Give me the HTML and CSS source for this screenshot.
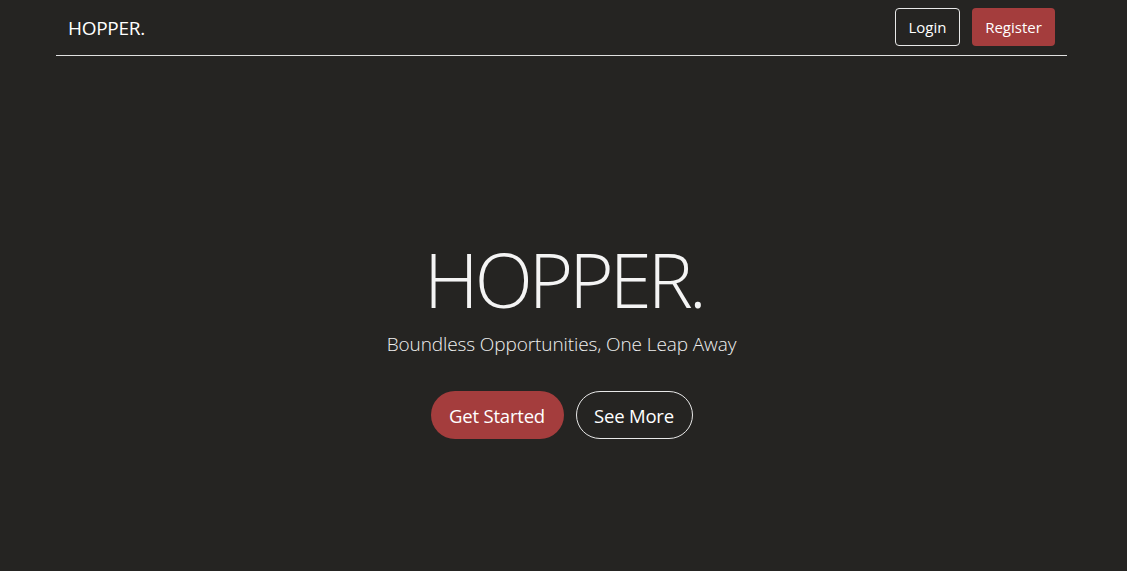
FILE: index.html
```html
<!DOCTYPE html>
<html lang="en">
<head>
<meta charset="utf-8">
<title>Hopper</title>
<link rel="stylesheet" href="styles.css">
</head>
<body>
<header class="nav">
  <a class="brand" href="#">HOPPER.</a>
  <div class="nav-actions">
    <a class="btn btn-outline" href="#">Login</a>
    <a class="btn btn-red" href="#">Register</a>
  </div>
</header>
<main class="hero">
  <h1 class="hero-title">HOPPER.</h1>
  <p class="hero-sub">Boundless Opportunities, One Leap Away</p>
  <div class="hero-actions">
    <a class="pill pill-red" href="#">Get Started</a>
    <a class="pill pill-outline" href="#">See More</a>
  </div>
</main>
</body>
</html>
```

FILE: styles.css
```css
* { box-sizing: border-box; }
html, body { height: 100%; }
body {
  margin: 0;
  background: #252422;
  color: #f2f2f2;
  font-family: "Open Sans", "Noto Sans", sans-serif;
}
a { text-decoration: none; color: inherit; }

.nav {
  margin: 0 60px 0 56px;
  height: 56px;
  padding: 0 12px;
  display: flex;
  align-items: center;
  justify-content: space-between;
  border-bottom: 1px solid #e0e0e0;
}
.brand {
  font-size: 19px;
  font-weight: 400;
  color: #ffffff;
  letter-spacing: -0.3px;
}
.nav-actions {
  display: flex;
  gap: 12px;
  align-items: center;
  margin-top: -1px;
}
.btn {
  display: inline-flex;
  align-items: center;
  justify-content: center;
  height: 38px;
  padding: 0 12px;
  font-size: 15px;
  border-radius: 4px;
  color: #ffffff;
}
.btn-outline { border: 1px solid #e8e8e8; width: 65px; }
.btn-red { background: #a43d3d; width: 83px; }

.hero {
  margin: 0 60px 0 56px;
  display: flex;
  flex-direction: column;
  align-items: center;
  padding-top: 176px;
}
.hero-title {
  margin: 0;
  font-size: 76px;
  font-weight: 300;
  line-height: 94px;
  letter-spacing: -4px;
  padding-left: 4px;
  color: #f4f4f4;
}
.hero-sub {
  margin: 0;
  margin-top: 4px;
  font-size: 19px;
  font-weight: 300;
  line-height: 28px;
  color: #f0f0f0;
  letter-spacing: -0.1px;
}
.hero-actions {
  display: flex;
  gap: 12px;
  margin-top: 33px;
}
.pill {
  display: inline-flex;
  align-items: center;
  justify-content: center;
  height: 48px;
  border-radius: 24px;
  font-size: 18.5px;
  color: #ffffff;
  letter-spacing: -0.2px;
}
.pill-red { background: #a43d3d; width: 133px; }
.pill-outline { border: 1px solid #e8e8e8; width: 117px; }
```
